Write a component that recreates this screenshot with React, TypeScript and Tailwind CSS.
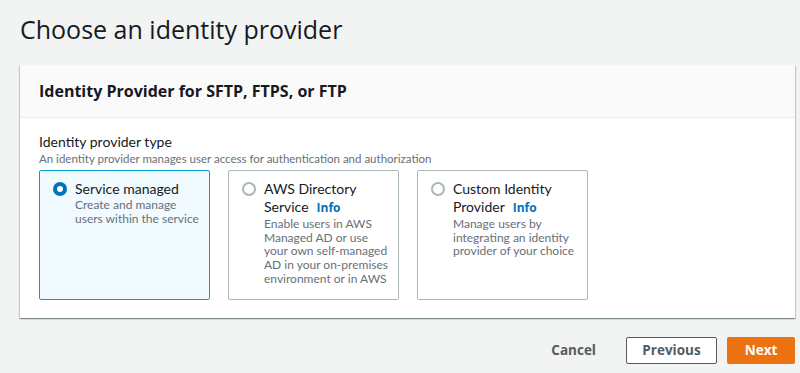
import React from "react";

const font = { fontFamily: '"Open Sans", "Liberation Sans", sans-serif' };
const lato = { fontFamily: 'Lato, "Open Sans", sans-serif' };

function Radio({ checked }: { checked: boolean }) {
  return checked ? (
    <span className="mt-[2px] flex h-[14px] w-[14px] shrink-0 items-center justify-center rounded-full bg-[#0073bb]">
      <span className="h-[6px] w-[6px] rounded-full bg-white" />
    </span>
  ) : (
    <span className="mt-[2px] h-[14px] w-[14px] shrink-0 rounded-full border-2 border-[#aab7b8] bg-white" />
  );
}

function Option({
  checked,
  title,
  info,
  desc,
}: {
  checked: boolean;
  title: React.ReactNode;
  info?: boolean;
  desc: string;
}) {
  return (
    <div
      className={
        "h-[130px] w-[171px] rounded-[2px] border pl-[13px] pr-[8px] pt-[9px] " +
        (checked ? "border-[#00a1c9] bg-[#f1faff]" : "border-[#aab7b8] bg-white")
      }
      style={lato}
    >
      <div className="flex gap-[8px]">
        <Radio checked={checked} />
        <div>
          <div className="text-[14px] leading-[18px] text-[#16191f]">
            {title}
            {info && (
              <span className="ml-[8px] text-[12px] font-bold text-[#0073bb]" style={font}>
                Info
              </span>
            )}
          </div>
          <div className="text-[12px] leading-[13.7px] text-[#687078]">{desc}</div>
        </div>
      </div>
    </div>
  );
}

export default function App() {
  return (
    <div
      className="h-[373px] w-[800px] overflow-hidden bg-[#f2f3f3] pl-[20px] pr-[5px]"
      style={font}
    >
      <h1 className="pt-[13px] text-[25px] leading-[32px] text-[#16191f]">
        Choose an identity provider
      </h1>
      <div className="mt-[20px] bg-white shadow-[0_1px_1px_0_rgba(0,28,36,0.3),1px_1px_1px_0_rgba(0,28,36,0.15),-1px_1px_1px_0_rgba(0,28,36,0.15)]">
        <div className="flex h-[53px] items-center border-b border-[#eaeded] bg-[#fafafa] px-[19px]">
          <h2 className="text-[16px] font-bold text-[#16191f]">
            Identity Provider for SFTP, FTPS, or FTP
          </h2>
        </div>
        <div className="px-[19px] pb-[18px] pt-[15px]" style={lato}>
          <div className="text-[14px] leading-[18px] text-[#16191f]">Identity provider type</div>
          <div className="text-[11.5px] leading-[15px] text-[#687078]">
            An identity provider manages user access for authentication and authorization
          </div>
          <div className="mt-[4px] flex gap-[18px]">
            <Option
              checked
              title="Service managed"
              desc="Create and manage users within the service"
            />
            <Option
              checked={false}
              title={
                <>
                  AWS Directory
                  <br />
                  Service
                </>
              }
              info
              desc="Enable users in AWS Managed AD or use your own self-managed AD in your on-premises environment or in AWS"
            />
            <Option
              checked={false}
              title={
                <>
                  Custom Identity
                  <br />
                  Provider
                </>
              }
              info
              desc="Manage users by integrating an identity provider of your choice"
            />
          </div>
        </div>
      </div>
      <div className="mt-[19px] flex items-center justify-end">
        <button className="mr-[30px] text-[13.5px] font-bold text-[#545b64]">Cancel</button>
        <button className="mr-[10px] h-[27px] w-[91px] rounded-[2px] border border-[#545b64] bg-white text-[13.5px] font-bold text-[#545b64]">
          Previous
        </button>
        <button className="h-[27px] w-[68px] rounded-[2px] bg-[#ec7211] text-[13.5px] font-bold text-white">
          Next
        </button>
      </div>
    </div>
  );
}
